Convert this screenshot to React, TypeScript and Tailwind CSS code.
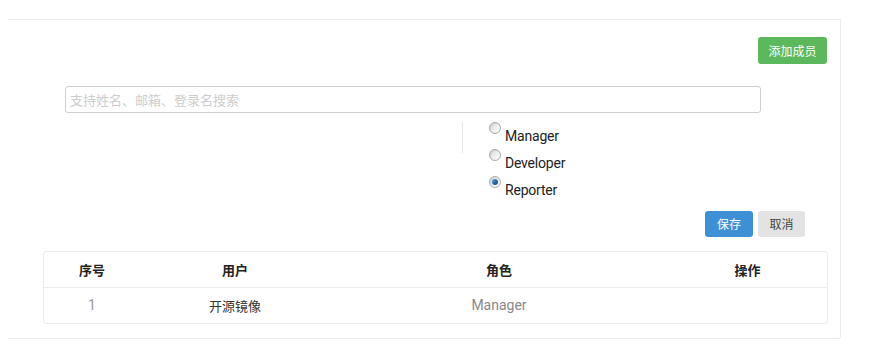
import { useState } from "react";

const roles = ["Manager", "Developer", "Reporter"];

const members = [{ id: 1, name: "开源镜像", role: "Manager" }];

function Radio({ checked }: { checked: boolean }) {
  return (
    <span className="flex h-[12px] w-[12px] shrink-0 items-center justify-center rounded-full border border-[#a9a9a9] bg-gradient-to-br from-[#dcdcdc] to-[#ffffff] shadow-[inset_1px_1px_1px_rgba(0,0,0,0.08)]">
      {checked && <span className="h-[6px] w-[6px] rounded-full bg-gradient-to-br from-[#4aa3e8] to-[#143f6b]" />}
    </span>
  );
}

export default function App() {
  const [role, setRole] = useState("Reporter");
  const [query, setQuery] = useState("");

  return (
    <div className="h-[358px] w-[874px] bg-white pt-[19px] pl-[8px] font-['Noto_Sans_CJK_SC',sans-serif] text-[#333]">
      <div className="flex w-[833px] flex-col rounded-br-[3px] border-t border-r border-b border-[#ececec] pb-[14px]">
        <div className="flex justify-end pt-[17px] pr-[13px]">
          <button
            type="button"
            className="h-[27px] w-[69px] rounded-[3px] bg-[#5cb85c] text-[12px] leading-[27px] text-white"
          >
            添加成员
          </button>
        </div>

        <div className="mt-[22px] ml-[57px]">
          <input
            value={query}
            onChange={(e) => setQuery(e.target.value)}
            placeholder="支持姓名、邮箱、登录名搜索"
            className="h-[27px] w-[696px] rounded-[3px] border border-[#cfcfcf] px-[4px] text-[13px] outline-none placeholder:text-[#cdcdcd]"
          />
        </div>

        <div className="mt-[9px] ml-[454px] flex">
          <div className="h-[31px] w-px bg-[#e6e6e6]" />
          <div className="ml-[26px] flex flex-col">
            {roles.map((r) => (
              <label
                key={r}
                className="flex h-[27px] cursor-pointer items-start gap-[4px]"
                onClick={() => setRole(r)}
              >
                <Radio checked={role === r} />
                <span className="mt-[4px] font-['Roboto',sans-serif] text-[14px] leading-[20px] tracking-[-0.2px] text-[#222]">
                  {r}
                </span>
              </label>
            ))}
          </div>
        </div>

        <div className="mt-[8px] flex justify-end gap-[5px] pr-[35px]">
          <button type="button" className="h-[26px] w-[48px] rounded-[3px] bg-[#3d8fd6] text-[12px] text-white">
            保存
          </button>
          <button type="button" className="h-[26px] w-[47px] rounded-[3px] bg-[#e3e3e3] text-[12px] text-[#444]">
            取消
          </button>
        </div>

        <div className="mt-[14px] ml-[35px] w-[785px] rounded-[3px] border border-[#ececec]">
          <div className="flex h-[36px] items-center border-b border-[#ececec] text-[13px] font-bold text-[#222]">
            <div className="w-[96px] text-center">序号</div>
            <div className="w-[190px] text-center">用户</div>
            <div className="w-[338px] text-center">角色</div>
            <div className="flex-1 text-center">操作</div>
          </div>
          {members.map((m) => (
            <div key={m.id} className="flex h-[35px] items-center text-[13px]">
              <div className="w-[96px] text-center font-['Roboto',sans-serif] text-[14px] text-[#999]">{m.id}</div>
              <div className="w-[190px] text-center text-[#333]">{m.name}</div>
              <div className="w-[338px] text-center font-['Roboto',sans-serif] text-[14px] text-[#888]">{m.role}</div>
              <div className="flex-1" />
            </div>
          ))}
        </div>
      </div>
    </div>
  );
}
